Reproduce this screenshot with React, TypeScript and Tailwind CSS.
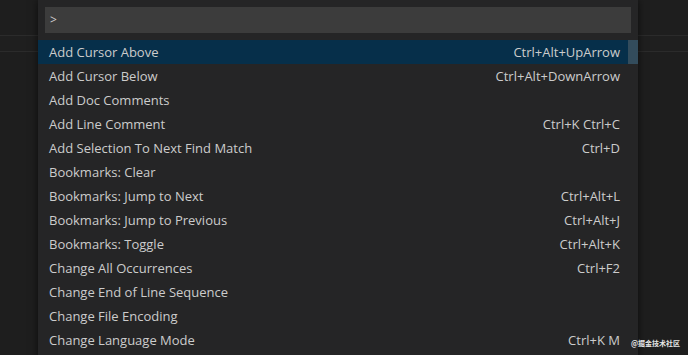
const commands: { label: string; keys?: string }[] = [
  { label: "Add Cursor Above", keys: "Ctrl+Alt+UpArrow" },
  { label: "Add Cursor Below", keys: "Ctrl+Alt+DownArrow" },
  { label: "Add Doc Comments" },
  { label: "Add Line Comment", keys: "Ctrl+K Ctrl+C" },
  { label: "Add Selection To Next Find Match", keys: "Ctrl+D" },
  { label: "Bookmarks: Clear" },
  { label: "Bookmarks: Jump to Next", keys: "Ctrl+Alt+L" },
  { label: "Bookmarks: Jump to Previous", keys: "Ctrl+Alt+J" },
  { label: "Bookmarks: Toggle", keys: "Ctrl+Alt+K" },
  { label: "Change All Occurrences", keys: "Ctrl+F2" },
  { label: "Change End of Line Sequence" },
  { label: "Change File Encoding" },
  { label: "Change Language Mode", keys: "Ctrl+K M" },
];

export default function App() {
  return (
    <div className="relative w-[688px] h-[355px] overflow-hidden bg-[#1e1e1e] font-['Open_Sans',sans-serif]">
      {/* editor behind */}
      <div className="flex flex-col">
        <div className="h-[35px] bg-[#1e1e1e]"></div>
        <div className="h-[17px] border-y border-[#2b2b2b] bg-[#1f1f1f]"></div>
        <div className="h-[303px] bg-[#1e1e1e]"></div>
      </div>

      {/* quick open */}
      <div className="absolute left-[38px] top-0 w-[600px] h-[360px] bg-[#252526] shadow-[0_0_8px_rgba(0,0,0,0.6)]">
        <div className="px-[7px] pt-[7px] pb-[7px]">
          <div className="h-[26px] bg-[#3c3c3c] flex items-center pl-[5px] text-[12px] text-[#cccccc]">
            &gt;
          </div>
        </div>

        <div className="relative">
          {commands.map((c, i) => (
            <div
              key={c.label}
              className={
                "h-6 pt-px flex items-center justify-between pl-[11px] pr-[18px] text-[13px] text-[#cccccc] " +
                (i === 0 ? "bg-[#062f4a]" : "")
              }
            >
              <span>{c.label}</span>
              {c.keys && <span>{c.keys}</span>}
            </div>
          ))}
          {/* scrollbar slider */}
          <div className="absolute right-0 top-0 w-[10px] h-6 bg-[#79797966]"></div>
        </div>
      </div>

      <div className="absolute right-[8px] bottom-[8px] text-[7px] leading-none font-bold text-[#e6e6e6] font-['Noto_Sans_CJK_SC',sans-serif]">
        @掘金技术社区
      </div>
    </div>
  );
}
